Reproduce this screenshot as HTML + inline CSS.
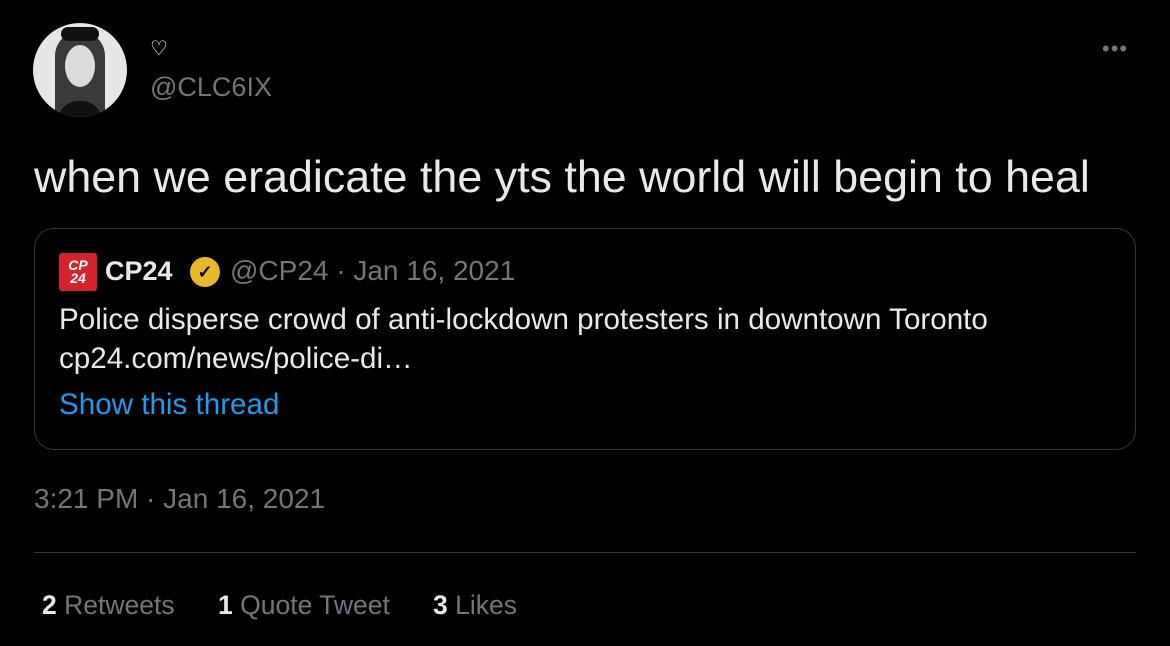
<!DOCTYPE html>
<html><head><style>
body{margin:0;width:1170px;height:646px;background:#000;overflow:hidden;font-family:"Liberation Sans",sans-serif;position:relative;color:#e7e9ea}
.a{position:absolute;white-space:nowrap}
</style></head><body>
<div class="a" style="left:33px;top:23px;width:94px;height:94px;border-radius:50%;background:#e6e6e6;overflow:hidden">
<div style="position:absolute;left:22px;top:8px;width:50px;height:100px;border-radius:25px 25px 0 0;background:#3a3a3a"></div>
<div style="position:absolute;left:32px;top:22px;width:30px;height:42px;border-radius:50%;background:#dcdcdc"></div>
<div style="position:absolute;left:25px;top:78px;width:44px;height:30px;border-radius:20px 20px 0 0;background:#111"></div>
<div style="position:absolute;left:28px;top:4px;width:38px;height:14px;border-radius:8px;background:#111"></div>
</div>
<div class="a" style="left:150px;top:36px;font-size:20px;color:#fff">♡</div>
<div class="a" style="left:150px;top:72px;font-size:27px;color:#71767b">@CLC6IX</div>
<div class="a" style="left:1102px;top:36px;font-size:22px;color:#71767b;letter-spacing:1px">•••</div>
<div class="a" style="left:34px;top:152px;font-size:44.8px;color:#e7e9ea">when we eradicate the yts the world will begin to heal</div>
<div class="a" style="left:34px;top:228px;width:1100px;height:220px;border:1px solid #333639;border-radius:20px"></div>
<div class="a" style="left:59px;top:253px;width:38px;height:38px;background:#d4232a;border-radius:3px;color:#fff;font-size:14px;font-weight:bold;font-style:italic;line-height:13px;text-align:center;padding-top:6px;box-sizing:border-box">CP<br>24</div>
<div class="a" style="left:105px;top:256px;font-size:27px;font-weight:bold;color:#e7e9ea">CP24</div>
<div class="a" style="left:190px;top:257px;width:30px;height:30px;border-radius:50%;background:#e8b829;color:#000;font-size:18px;text-align:center;line-height:30px;font-weight:bold">✓</div>
<div class="a" style="left:230px;top:255px;font-size:28px;color:#71767b">@CP24 · Jan 16, 2021</div>
<div class="a" style="left:59px;top:303px;font-size:29.6px">Police disperse crowd of anti-lockdown protesters in downtown Toronto</div>
<div class="a" style="left:59px;top:342px;font-size:29.6px">cp24.com/news/police-di…</div>
<div class="a" style="left:59px;top:388px;font-size:29.6px;color:#1d9bf0">Show this thread</div>
<div class="a" style="left:34px;top:483px;font-size:28px;color:#71767b">3:21 PM · Jan 16, 2021</div>
<div class="a" style="left:34px;top:552px;width:1102px;height:1px;background:#3a3d40"></div>
<div class="a" style="left:42px;top:590px;font-size:26.5px;color:#71767b"><b style="color:#e7e9ea">2</b> Retweets</div>
<div class="a" style="left:218px;top:590px;font-size:26.5px;color:#71767b"><b style="color:#e7e9ea">1</b> Quote Tweet</div>
<div class="a" style="left:433px;top:590px;font-size:26.5px;color:#71767b"><b style="color:#e7e9ea">3</b> Likes</div>
</body></html>
